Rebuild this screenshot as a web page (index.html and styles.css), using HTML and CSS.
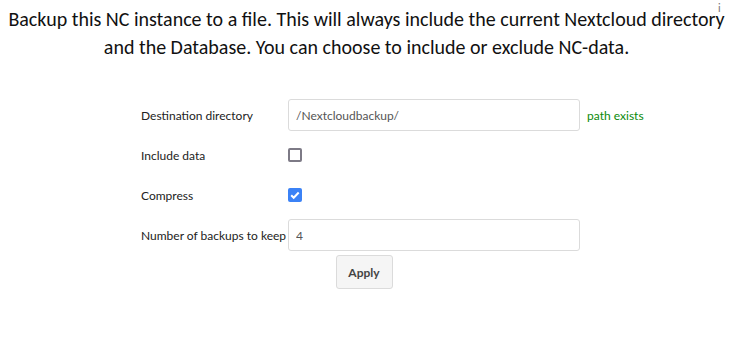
FILE: index.html
```html
<!DOCTYPE html>
<html lang="en">
<head>
  <meta charset="UTF-8">
  <title>Backup</title>
  <link rel="stylesheet" href="styles.css">
</head>
<body>
  <div class="info-icon">i</div>

  <p class="intro">
    Backup this NC instance to a file. This will always include the current Nextcloud directory
    and the Database. You can choose to include or exclude NC-data.
  </p>

  <form class="backup-form">
    <table class="settings">
      <tr>
        <td class="label">Destination directory</td>
        <td><input type="text" class="text-input" value="/Nextcloudbackup/"></td>
        <td class="hint">path exists</td>
      </tr>
      <tr>
        <td class="label">Include data</td>
        <td><span class="checkbox"></span></td>
        <td></td>
      </tr>
      <tr>
        <td class="label">Compress</td>
        <td>
          <span class="checkbox checked">
            <svg viewBox="0 0 14 14" width="14" height="14"><path d="M3.2 7.2l2.5 2.5 5-5.2" fill="none" stroke="#fff" stroke-width="2"/></svg>
          </span>
        </td>
        <td></td>
      </tr>
      <tr>
        <td class="label">Number of backups to keep</td>
        <td><input type="text" class="text-input" value="4"></td>
        <td></td>
      </tr>
    </table>

    <div class="actions">
      <button type="button" class="btn">Apply</button>
    </div>
  </form>
</body>
</html>
```

FILE: styles.css
```css
* {
  box-sizing: border-box;
}

body {
  margin: 0;
  padding: 0;
  font-family: Lato, sans-serif;
  color: #000;
  background: #fff;
}

.info-icon {
  position: absolute;
  top: 1px;
  left: 718px;
  font-size: 11px;
  color: #777;
}

.intro {
  margin: 5px 0 0;
  text-align: center;
  font-family: Carlito, Calibri, Lato, sans-serif;
  font-size: 20px;
  line-height: 28px;
  color: #111;
}

.backup-form {
  margin-top: 34px;
  font-size: 12px;
  color: #222;
}

.settings {
  margin-left: 139px;
  border-collapse: collapse;
}

.settings td {
  padding: 0 2px;
  height: 40px;
  vertical-align: middle;
}

.settings td.label {
  padding-right: 0;
  white-space: nowrap;
}

.text-input {
  display: block;
  width: 292px;
  height: 32px;
  padding: 0 7px;
  border: 1px solid #dbdbdb;
  border-radius: 3px;
  font-family: Lato, sans-serif;
  font-size: 12px;
  color: #555;
  background: #fff;
}

.settings td.hint {
  color: #0a8a0a;
  padding-left: 5px;
}

.checkbox {
  display: block;
  width: 14px;
  height: 14px;
  border: 2px solid #7d7a86;
  border-radius: 2px;
}

.checkbox.checked {
  border: none;
  background: #3b82f6;
}

.checkbox svg {
  display: block;
}

.actions {
  padding-right: 5px;
  text-align: center;
}

.btn {
  width: 57px;
  height: 34px;
  border: 1px solid #dbdbdb;
  border-radius: 3px;
  background: #f5f5f5;
  font-family: Lato, sans-serif;
  font-size: 12px;
  font-weight: bold;
  color: #444;
}
```
